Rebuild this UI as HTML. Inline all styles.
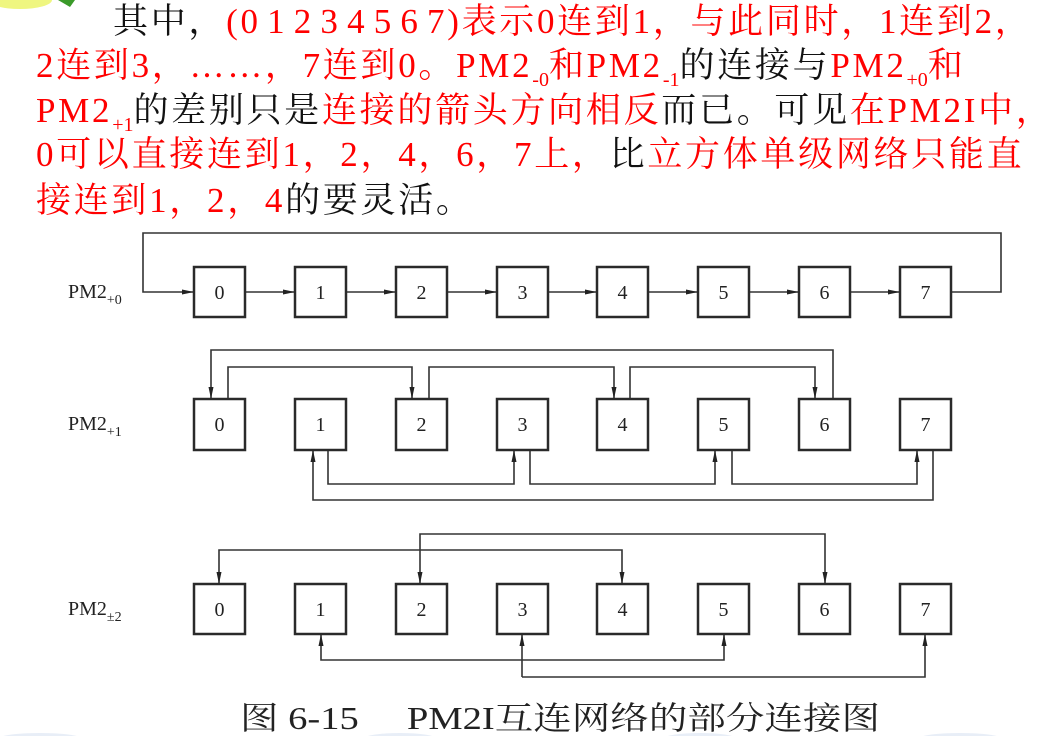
<!DOCTYPE html>
<html><head><meta charset="utf-8">
<style>
html,body{margin:0;padding:0;background:#fff;}
body{width:1039px;height:736px;position:relative;overflow:hidden;font-family:"Liberation Serif","Noto Serif CJK SC",serif;}
.l{position:absolute;left:36px;font-size:35px;line-height:40px;letter-spacing:2.7px;white-space:nowrap;color:#111;}
.r{color:#f00;}
.ws{word-spacing:-5px;}
sub{font-size:20px;vertical-align:-9px;line-height:0;letter-spacing:0;}
svg{position:absolute;left:0;top:0;}
</style></head><body>
<svg width="1039" height="736" viewBox="0 0 1039 736">
<defs>
<marker id="ah" markerWidth="12" markerHeight="8" refX="11" refY="4" orient="auto" markerUnits="userSpaceOnUse">
<path d="M0,1.5 L12,4 L0,6.5 Z" fill="#222"/></marker>
</defs>
<ellipse cx="20" cy="0" rx="32" ry="9" fill="#e8f24a" opacity="0.7"/>
<path d="M58,0 L75,0 L70,7 Z" fill="#3a9a2a"/>
<g fill="#d8e2f2" opacity="0.6">
<ellipse cx="40" cy="738" rx="40" ry="5"/>
<ellipse cx="400" cy="738" rx="35" ry="5"/>
<ellipse cx="700" cy="738" rx="35" ry="5"/>
<ellipse cx="960" cy="738" rx="40" ry="5"/>
</g>
<g font-family="Liberation Serif, serif" font-size="20" fill="#222">
<text x="68" y="298">PM2<tspan font-size="14" dy="6">+0</tspan></text>
<text x="68" y="430">PM2<tspan font-size="14" dy="6">+1</tspan></text>
<text x="68" y="615">PM2<tspan font-size="14" dy="6">±2</tspan></text>
</g>
<g fill="#fff" stroke="#2a2a2a" stroke-width="2.5">
<rect x="194" y="267" width="51" height="50"/><rect x="295" y="267" width="51" height="50"/><rect x="396" y="267" width="51" height="50"/><rect x="497" y="267" width="51" height="50"/><rect x="597" y="267" width="51" height="50"/><rect x="698" y="267" width="51" height="50"/><rect x="799" y="267" width="51" height="50"/><rect x="900" y="267" width="51" height="50"/>
<rect x="194" y="399" width="51" height="51"/><rect x="295" y="399" width="51" height="51"/><rect x="396" y="399" width="51" height="51"/><rect x="497" y="399" width="51" height="51"/><rect x="597" y="399" width="51" height="51"/><rect x="698" y="399" width="51" height="51"/><rect x="799" y="399" width="51" height="51"/><rect x="900" y="399" width="51" height="51"/>
<rect x="194" y="584" width="51" height="50"/><rect x="295" y="584" width="51" height="50"/><rect x="396" y="584" width="51" height="50"/><rect x="497" y="584" width="51" height="50"/><rect x="597" y="584" width="51" height="50"/><rect x="698" y="584" width="51" height="50"/><rect x="799" y="584" width="51" height="50"/><rect x="900" y="584" width="51" height="50"/>
</g>
<g font-family="Liberation Serif, serif" font-size="20" fill="#222" text-anchor="middle">
<text x="219.5" y="299">0</text><text x="320.5" y="299">1</text><text x="421.5" y="299">2</text><text x="522.5" y="299">3</text><text x="622.5" y="299">4</text><text x="723.5" y="299">5</text><text x="824.5" y="299">6</text><text x="925.5" y="299">7</text>
<text x="219.5" y="431">0</text><text x="320.5" y="431">1</text><text x="421.5" y="431">2</text><text x="522.5" y="431">3</text><text x="622.5" y="431">4</text><text x="723.5" y="431">5</text><text x="824.5" y="431">6</text><text x="925.5" y="431">7</text>
<text x="219.5" y="616">0</text><text x="320.5" y="616">1</text><text x="421.5" y="616">2</text><text x="522.5" y="616">3</text><text x="622.5" y="616">4</text><text x="723.5" y="616">5</text><text x="824.5" y="616">6</text><text x="925.5" y="616">7</text>
</g>
<g fill="none" stroke="#333" stroke-width="1.6">
<path d="M246,292 H294" marker-end="url(#ah)"/><path d="M347,292 H395" marker-end="url(#ah)"/><path d="M448,292 H496" marker-end="url(#ah)"/><path d="M549,292 H596" marker-end="url(#ah)"/><path d="M649,292 H697" marker-end="url(#ah)"/><path d="M750,292 H798" marker-end="url(#ah)"/><path d="M851,292 H899" marker-end="url(#ah)"/>
<path d="M952,292 H1001 V233 H143 V292 H193" marker-end="url(#ah)"/>
<path d="M833,398 V350 H211 V398" marker-end="url(#ah)"/>
<path d="M228,398 V367 H412 V398" marker-end="url(#ah)"/>
<path d="M429,398 V367 H614 V398" marker-end="url(#ah)"/>
<path d="M630,398 V367 H815 V398" marker-end="url(#ah)"/>
<path d="M328,451 V484 H514 V451" marker-end="url(#ah)"/>
<path d="M530,451 V484 H715 V451" marker-end="url(#ah)"/>
<path d="M732,451 V484 H917 V451" marker-end="url(#ah)"/>
<path d="M933,451 V500 H313 V451" marker-end="url(#ah)"/>
<path d="M420,550 V534 H825 V583" marker-end="url(#ah)"/>
<path d="M420,550 V583" marker-end="url(#ah)"/>
<path d="M420,550 H219 V583" marker-end="url(#ah)"/>
<path d="M420,550 H622 V583" marker-end="url(#ah)"/>
<path d="M522,660 H321 V635" marker-end="url(#ah)"/>
<path d="M522,660 H724 V635" marker-end="url(#ah)"/>
<path d="M522,677 V635" marker-end="url(#ah)"/>
<path d="M522,677 H925 V635" marker-end="url(#ah)"/>
</g>
<text x="240" y="729" font-family="Liberation Serif, 'Noto Serif CJK SC', serif" font-size="32" fill="#222" textLength="640" lengthAdjust="spacingAndGlyphs">图 6-15　 PM2I互连网络的部分连接图</text>
</svg>
<div class="l" style="top:2px;left:113px;">其中，<span class="r"><span class="ws">(0 1 2 3 4 5 6 7)</span>表示0连到1，与此同时，1连到2，</span></div>
<div class="l r" style="top:46px;">2连到3，……，7连到0。PM2<sub>-0</sub>和PM2<sub>-1</sub><span style="color:#111">的连接与</span>PM2<sub>+0</sub>和</div>
<div class="l" style="top:91px;"><span class="r">PM2<sub>+1</sub></span>的差别只是<span class="r">连接的箭头方向相反</span>而已。可见<span class="r">在PM2I中，</span></div>
<div class="l r" style="top:135px;">0可以直接连到1，2，4，6，7上，<span style="color:#111">比</span>立方体单级网络只能直</div>
<div class="l" style="top:181px;"><span class="r">接连到1，2，4</span>的要灵活。</div>
</body></html>
